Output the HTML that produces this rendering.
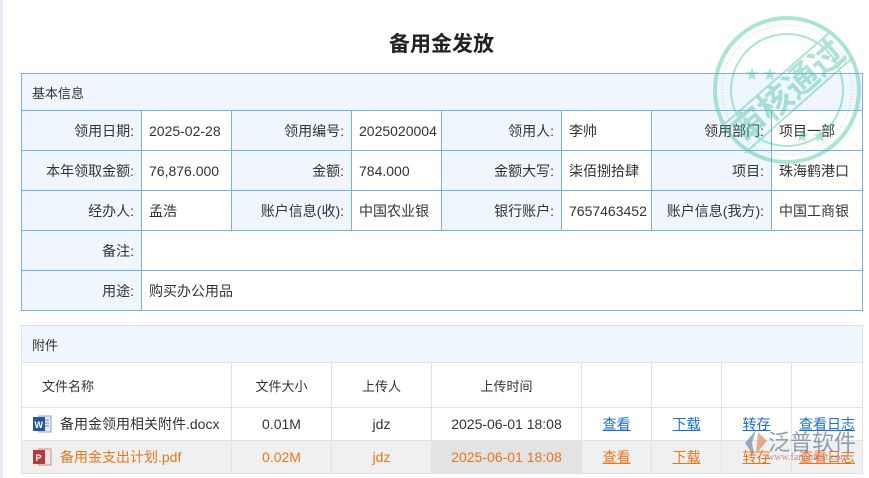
<!DOCTYPE html>
<html><head><meta charset="utf-8"><style>
*{box-sizing:border-box;margin:0;padding:0}
body{width:869px;height:478px;background:#fff;font-family:"Liberation Sans","Noto Sans CJK SC",sans-serif;font-size:14px;color:#333;position:relative;overflow:hidden}
.lb{position:absolute;left:0;top:0;width:3px;height:478px;background:#e8eef7}
h1{position:absolute;top:28px;left:0;width:883px;text-align:center;font-size:21px;font-weight:bold;color:#222;font-family:"Liberation Sans","Noto Sans CJK SC",sans-serif}
table{position:absolute;border-collapse:collapse;table-layout:fixed}
#t1{left:21px;top:73px;width:841px}
#t1 td{border:1px solid #7ab0dc;height:40px;padding:0 7px;white-space:nowrap;overflow:hidden}
#t1 td.l{background:#eff6fe;text-align:right}
#t1 td.h{background:#eff6fe;height:37px;padding-left:10px;font-size:13px}
#t2{left:21px;top:325px;width:841px;border:1px solid #7ab0dc}
#t2 td{border:1px solid #e2e2e2;text-align:center;white-space:nowrap}
#t2 td.h{background:#eff6fe;height:37px;text-align:left;padding-left:10px;border-bottom:1px solid #e2e2e2;font-size:13px}
#t2 tr.c td{height:45px;font-size:13px}
#t2 tr.r td{height:33px}
#t2 tr.o td{background:#f0f0f0;color:#e8761e}
#t2 tr.o td.g{background:#e3e3e3}
a{color:#1a6fd8;text-decoration:underline}
tr.o a{color:#e8761e}
.ic{display:inline-block;width:20px;height:20px;vertical-align:-5px;margin-right:8px;position:relative}
</style></head><body>
<div class="lb"></div>
<h1>备用金发放</h1>
<table id="t1">
<colgroup><col style="width:120px"><col style="width:90px"><col style="width:120px"><col style="width:90px"><col style="width:120px"><col style="width:90px"><col style="width:120px"><col style="width:91px"></colgroup>
<tr><td class="h" colspan="8">基本信息</td></tr>
<tr><td class="l">领用日期:</td><td>2025-02-28</td><td class="l">领用编号:</td><td>2025020004</td><td class="l">领用人:</td><td>李帅</td><td class="l">领用部门:</td><td>项目一部</td></tr>
<tr><td class="l">本年领取金额:</td><td>76,876.000</td><td class="l">金额:</td><td>784.000</td><td class="l">金额大写:</td><td>柒佰捌拾肆</td><td class="l">项目:</td><td>珠海鹤港口</td></tr>
<tr><td class="l">经办人:</td><td>孟浩</td><td class="l">账户信息(收):</td><td>中国农业银</td><td class="l">银行账户:</td><td>7657463452</td><td class="l">账户信息(我方):</td><td>中国工商银</td></tr>
<tr><td class="l">备注:</td><td colspan="7"></td></tr>
<tr><td class="l">用途:</td><td colspan="7">购买办公用品</td></tr>
</table>
<table id="t2">
<colgroup><col style="width:210px"><col style="width:100px"><col style="width:100px"><col style="width:150px"><col style="width:70px"><col style="width:70px"><col style="width:70px"><col style="width:71px"></colgroup>
<tr><td class="h" colspan="8">附件</td></tr>
<tr class="c"><td style="text-align:left;padding-left:20px">文件名称</td><td>文件大小</td><td>上传人</td><td>上传时间</td><td></td><td></td><td></td><td></td></tr>
<tr class="r"><td style="text-align:left;padding-left:10px"><span class="ic"><svg width="20" height="20"><rect x="7" y="2" width="12" height="16" fill="#e4ebf5" stroke="#8aa3c8"/><line x1="10" y1="6" x2="17" y2="6" stroke="#6d8cc0"/><line x1="10" y1="9" x2="17" y2="9" stroke="#6d8cc0"/><line x1="10" y1="12" x2="17" y2="12" stroke="#6d8cc0"/><rect x="1" y="3" width="12" height="14" fill="#2b5797"/><text x="2.5" y="14" font-size="9" fill="#fff" font-family="Liberation Sans" font-weight="bold">W</text></svg></span>备用金领用相关附件.docx</td><td>0.01M</td><td>jdz</td><td>2025-06-01 18:08</td><td><a>查看</a></td><td><a>下载</a></td><td><a>转存</a></td><td><a>查看日志</a></td></tr>
<tr class="r o"><td style="text-align:left;padding-left:10px"><span class="ic"><svg width="20" height="20"><rect x="7" y="2" width="12" height="16" fill="#f5e4e4" stroke="#c88a8a"/><rect x="1" y="3" width="12" height="14" fill="#b83b3b"/><text x="3.5" y="14" font-size="9" fill="#fff" font-family="Liberation Sans" font-weight="bold">P</text></svg></span>备用金支出计划.pdf</td><td>0.02M</td><td>jdz</td><td class="g">2025-06-01 18:08</td><td><a>查看</a></td><td><a>下载</a></td><td><a>转存</a></td><td><a>查看日志</a></td></tr>
</table>
<svg style="position:absolute;left:711px;top:15px;opacity:.45" width="152" height="150" viewBox="0 0 152 150">
<g fill="none" stroke="#4cc2a0">
<circle cx="76" cy="75" r="72" stroke-width="4"/>
<circle cx="76" cy="75" r="65" stroke-width="1" stroke-dasharray="1 2"/>
<circle cx="76" cy="75" r="56" stroke-width="2"/>
<line x1="10" y1="112" x2="118" y2="18" stroke-width="2"/>
<line x1="34" y1="138" x2="140" y2="44" stroke-width="2"/>
</g>
<text x="0" y="0" transform="translate(34,130) rotate(-41)" font-size="34" font-weight="bold" fill="#4cc2a0" font-family="Noto Sans CJK SC,sans-serif">审核通过</text>
<text x="34" y="64" font-size="14" fill="#4cc2a0">★ ★</text>
<text x="84" y="126" font-size="14" fill="#4cc2a0">★ ★</text>
</svg>
<div style="position:absolute;left:743px;top:428px;opacity:.75;font-family:'Noto Sans CJK SC',sans-serif">
<svg width="26" height="30" style="position:absolute;left:0;top:0"><path d="M13 2 L2 15 L11 28 L9 15 Z" fill="#7a8ea8"/><path d="M15 4 L24 13 L13 26 Z" fill="#e09070"/></svg>
<span style="position:absolute;left:25px;top:-3px;font-size:22px;color:#6a7f98;white-space:nowrap">泛普软件</span>
<span style="position:absolute;left:24px;top:24px;font-size:10px;color:#c07070;white-space:nowrap;font-family:'Liberation Serif',serif">www.fanpusoft.com</span>
</div>
</body></html>
